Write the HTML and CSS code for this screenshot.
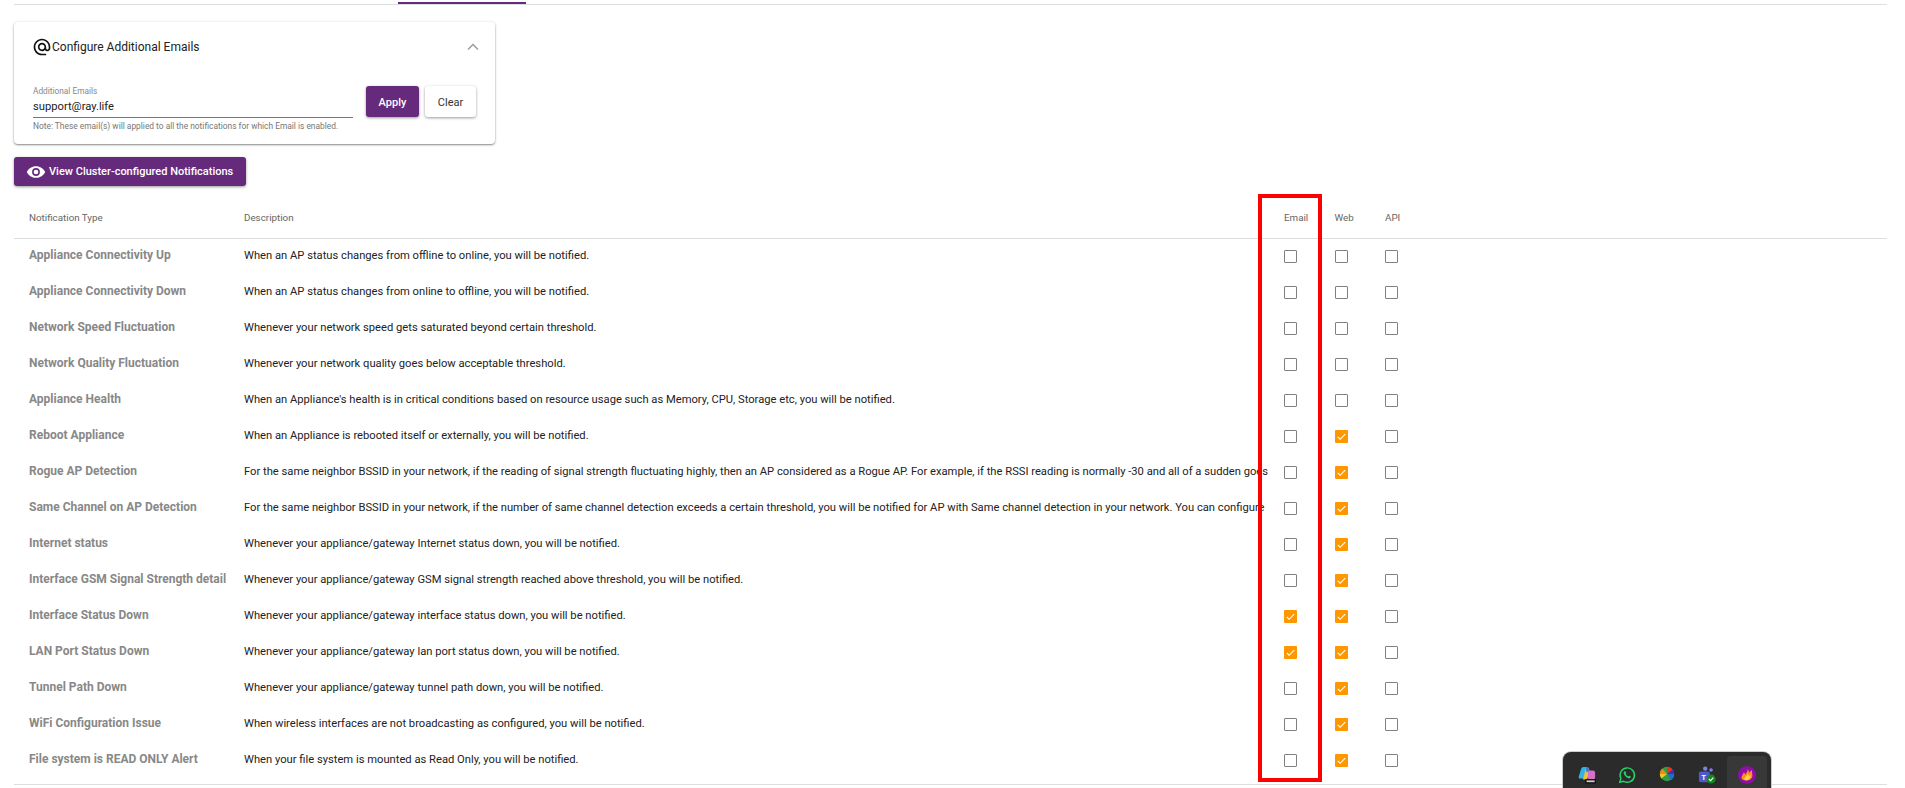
FILE: index.html
```html
<!DOCTYPE html>
<html lang="en">
<head>
    <meta charset="UTF-8">
    <title>Notifications</title>
    <link rel="stylesheet" href="styles.css">
</head>
<body>
    <div class="tabs"><span class="tab-active"></span></div>

    <div class="card">
        <div class="card-head">
            <svg class="at" viewBox="0 0 24 24" width="20" height="20"><path fill="#111" d="M12 2C6.480 2 2 6.480 2 12s4.480 10 10 10h5v-2h-5c-4.340 0-8-3.660-8-8s3.660-8 8-8 8 3.660 8 8v1.430c0 .790-.710 1.570-1.500 1.570s-1.500-.780-1.500-1.570V12c0-2.760-2.240-5-5-5s-5 2.240-5 5 2.240 5 5 5c1.380 0 2.640-.560 3.540-1.470.650.890 1.770 1.470 2.960 1.470 1.970 0 3.500-1.600 3.500-3.570V12c0-5.520-4.480-10-10-10zm0 13c-1.660 0-3-1.340-3-3s1.340-3 3-3 3 1.340 3 3-1.340 3-3 3z"/></svg>
            <span class="card-title">Configure Additional Emails</span>
            <svg class="chevron" viewBox="0 0 24 24" width="20" height="20"><path d="M6 15l6-6 6 6" fill="none" stroke="#999" stroke-width="1.6"/></svg>
        </div>
        <div class="email-row">
            <div class="field">
                <label>Additional Emails</label>
                <div class="value">support@ray.life</div>
                <p class="note">Note: These email(s) will applied to all the notifications for which Email is enabled.</p>
            </div>
            <button class="button button-main">Apply</button>
            <button class="button button-plain">Clear</button>
        </div>
    </div>

    <button class="button button-main button-view">
        <svg viewBox="0 0 24 24" width="20" height="20"><path fill="#fff" d="M12 5C7 5 2.700 8.100 1 12c1.700 3.900 6 7 11 7s9.300-3.100 11-7c-1.700-3.900-6-7-11-7zm0 11.700a4.700 4.700 0 1 1 0-9.400 4.700 4.700 0 0 1 0 9.400zm0-7.500a2.800 2.800 0 1 0 0 5.600 2.800 2.800 0 0 0 0-5.600z"/></svg>
        View Cluster-configured Notifications
    </button>

    <div class="table">
        <div class="row row-head">
            <div class="type">Notification Type</div>
            <div class="desc">Description</div>
            <div class="check">Email</div>
            <div class="check">Web</div>
            <div class="check">API</div>
        </div>
        <div id="rows"></div>
    </div>

    <div class="red-box"></div>

    <div class="dock">
        <span class="dock-item">
            <svg viewBox="0 0 20 20" width="18" height="18"><path d="M6 1h4l-3 13H2c-1 0-1.500-1-1.200-2L3.500 3C4 1.800 5 1 6 1z" fill="#2fb4ea"/><path d="M9 2h3l1 4-3 9H5.500z" fill="#f4c22e"/><path d="M8.500 1.500c1.500-.5 3 0 3.500 1.500l1 3-3.500 1z" fill="#3b7ae0"/><rect x="11" y="5" width="8" height="10" rx="2.500" fill="#d96fc8"/><rect x="8" y="14.500" width="12" height="5" fill="#111"/><rect x="9.500" y="16" width="9" height="2" fill="#ccc"/></svg>
        </span>
        <span class="dock-item">
            <svg viewBox="0 0 20 20" width="18" height="18"><path d="M2 18l1.200-4.300A8 8 0 1 1 6.300 17z" fill="none" stroke="#25d366" stroke-width="1.600"/><path d="M7 6c-1 1-1 2.500.5 4.500S11 14 13 13.500c1-.3 1.300-1.300 1.200-1.800l-2-1-.8 1c-1-.3-2.500-1.800-3-3l.8-.9-.9-2z" fill="#25d366"/></svg>
        </span>
        <span class="dock-item">
            <svg viewBox="0 0 20 20" width="16" height="16"><circle cx="10" cy="10" r="9" fill="#2f9e3f"/><path d="M10 10V1a9 9 0 0 1 7 3.500z" fill="#e8331f"/><path d="M10 10l7-5.500A9 9 0 0 1 19 10z" fill="#4b2ca8"/><path d="M10 10h9a9 9 0 0 1-4 7.500z" fill="#1c6fd0"/><path d="M10 10l-7 5.500A9 9 0 0 1 1 10z" fill="#f3c71e"/><path d="M10 10H1a9 9 0 0 1 3-7z" fill="#f08a1d"/></svg>
        </span>
        <span class="dock-item">
            <svg viewBox="0 0 20 20" width="18" height="18"><circle cx="8" cy="3" r="2.400" fill="#7b83eb"/><circle cx="14.500" cy="4.500" r="2" fill="#7b83eb"/><rect x="1" y="6" width="12" height="12" rx="2" fill="#5059c9"/><text x="3.800" y="15.500" class="teams-t">T</text><circle cx="14.500" cy="14.500" r="5" fill="#13881f"/><path d="M12 14.500l2 1.800 3-3.300" fill="none" stroke="#fff" stroke-width="1.300"/></svg>
        </span>
        <span class="dock-item dock-active">
            <svg viewBox="0 0 20 20" width="18" height="18"><circle cx="10" cy="10" r="10" fill="#8e0fa6"/><path d="M4 14c-.5-3 1.500-4 2.500-7 1 .8 1.300 1.800 1.300 2.800C9.500 7.500 10.500 6 11 3.500c1 1 1.200 2.500 1 4 1-.8 2-2 3.500-3-.3 2.500.5 4 .5 6 0 3-2.500 5.500-6 5.500-3 0-5.700-.5-6-2z" fill="#ff8a2a"/><path d="M7 15c0-2.500 2.500-3.500 4-6.500.8 1.500 1 2 .8 3 .8-.5 1.500-1 2.200-2 .3 3-1 6-4 6.300-1.500.1-3-.2-3-.8z" fill="#ffd23f"/></svg>
        </span>
    </div>

    <script src="rows.js"></script>
</body>
</html>
```

FILE: rows.js
```js
const rows = [
    ["Appliance Connectivity Up", "When an AP status changes from offline to online, you will be notified.", 0, 0, 0],
    ["Appliance Connectivity Down", "When an AP status changes from online to offline, you will be notified.", 0, 0, 0],
    ["Network Speed Fluctuation", "Whenever your network speed gets saturated beyond certain threshold.", 0, 0, 0],
    ["Network Quality Fluctuation", "Whenever your network quality goes below acceptable threshold.", 0, 0, 0],
    ["Appliance Health", "When an Appliance's health is in critical conditions based on resource usage such as Memory, CPU, Storage etc, you will be notified.", 0, 0, 0],
    ["Reboot Appliance", "When an Appliance is rebooted itself or externally, you will be notified.", 0, 1, 0],
    ["Rogue AP Detection", "For the same neighbor BSSID in your network, if the reading of signal strength fluctuating highly, then an AP considered as a Rogue AP. For example, if the RSSI reading is normally -30 and all of a sudden goes", 0, 1, 0],
    ["Same Channel on AP Detection", "For the same neighbor BSSID in your network, if the number of same channel detection exceeds a certain threshold, you will be notified for AP with Same channel detection in your network. You can configure", 0, 1, 0],
    ["Internet status", "Whenever your appliance/gateway Internet status down, you will be notified.", 0, 1, 0],
    ["Interface GSM Signal Strength detail", "Whenever your appliance/gateway GSM signal strength reached above threshold, you will be notified.", 0, 1, 0],
    ["Interface Status Down", "Whenever your appliance/gateway interface status down, you will be notified.", 1, 1, 0],
    ["LAN Port Status Down", "Whenever your appliance/gateway lan port status down, you will be notified.", 1, 1, 0],
    ["Tunnel Path Down", "Whenever your appliance/gateway tunnel path down, you will be notified.", 0, 1, 0],
    ["WiFi Configuration Issue", "When wireless interfaces are not broadcasting as configured, you will be notified.", 0, 1, 0],
    ["File system is READ ONLY Alert", "When your file system is mounted as Read Only, you will be notified.", 0, 1, 0]
];

function box(on) {
    return `<div class="check"><span class="box${on ? " box-on" : ""}">${on ? '<svg viewBox="0 0 14 14" width="13" height="13"><path d="M3 7.500l2.500 2.500L11 4.500" fill="none" stroke="#fff" stroke-width="1.200"/></svg>' : ""}</span></div>`;
}

document.getElementById("rows").innerHTML = rows.map(r =>
    `<div class="row row-body"><div class="type type-bold">${r[0]}</div><div class="desc">${r[1]}</div>${box(r[2])}${box(r[3])}${box(r[4])}</div>`
).join("");
```

FILE: styles.css
```css
body {
    margin: 0;
    height: 788px;
    overflow: hidden;
    font-family: Roboto, "Liberation Sans", sans-serif;
    background-color: #fff;
    color: #222;
    position: relative;
}
.tabs {
    display: flex;
    align-items: flex-end;
    height: 4px;
    border-bottom: 1px solid #dedede;
    margin: 0 18px 0 14px;
    padding-left: 384px;
}
.tab-active {
    width: 128px;
    height: 2px;
    background: #662a7d;
}
.card {
    width: 481px;
    height: 122px;
    margin: 17px 0 0 14px;
    border-radius: 4px;
    background: #fff;
    box-shadow: 0 1px 2px rgba(0, 0, 0, 0.45), 0 0 4px rgba(0, 0, 0, 0.06);
}
.card-head {
    display: flex;
    align-items: center;
    height: 50px;
    padding: 0 12px 0 18px;
    font-size: 12px;
}
.card-title {
    flex: 1;
}
.email-row {
    display: flex;
    align-items: flex-start;
    padding: 14px 0 0 19px;
}
.field {
    width: 320px;
    margin-right: 13px;
}
.field label {
    display: block;
    font-size: 8.300px;
    line-height: 10px;
    color: #888;
}
.value {
    font-size: 11.200px;
    line-height: 20px;
    height: 20px;
    padding-top: 1px;
    border-bottom: 1px solid #777;
}
.note {
    margin: 3px 0 0;
    font-size: 8.400px;
    line-height: 10px;
    color: #777;
}
.button {
    font-family: inherit;
    font-size: 11px;
    font-weight: 500;
    border: none;
    border-radius: 3px;
    box-shadow: 0 1px 3px rgba(0, 0, 0, 0.4);
    height: 31px;
    padding-top: 2px;
}
.button-main {
    background-color: #662a7d;
    color: #fff;
    width: 53px;
}
.button-plain {
    background-color: #fff;
    color: #333;
    width: 51px;
    margin-left: 6px;
    font-weight: 400;
}
.button-view {
    display: flex;
    align-items: center;
    gap: 3px;
    width: 232px;
    height: 29px;
    margin: 13px 0 0 14px;
    padding: 0 0 0 12px;
}
.table {
    margin: 10px 18px 0 14px;
    border-bottom: 1px solid #dedede;
    padding-bottom: 5px;
}
.row {
    display: flex;
    align-items: center;
    height: 36px;
}
.row-body {
    box-sizing: border-box;
    padding-bottom: 2px;
    font-size: 11.200px;
}
.row-body .type,
.row-body .desc {
    margin-bottom: 2px;
}
.row-head {
    height: 42px;
    font-size: 9.800px;
    color: #666;
    border-bottom: 1px solid #dedede;
}
.type {
    width: 215px;
    padding-left: 15px;
    flex-shrink: 0;
}
.type-bold {
    font-weight: 700;
    color: #888;
    font-size: 12px;
}
.desc {
    width: 1040px;
    flex-shrink: 0;
    white-space: nowrap;
}
.check {
    width: 50.500px;
    flex-shrink: 0;
}
.box {
    display: flex;
    box-sizing: border-box;
    width: 13px;
    height: 13px;
    border: 1px solid #808080;
    border-radius: 1px;
}
.box-on {
    border: none;
    background: #ff9800;
}
.red-box {
    position: absolute;
    left: 1258px;
    top: 194px;
    width: 56px;
    height: 580px;
    border: 4px solid #f00;
}
.dock {
    position: absolute;
    left: 1563px;
    top: 752px;
    display: flex;
    width: 208px;
    height: 40px;
    padding: 4px 4px 0 4px;
    box-sizing: border-box;
    background: #2b2b2b;
    border-radius: 8px 8px 0 0;
    box-shadow: 0 0 0 1px #ccc;
}
.dock-item {
    flex: 1;
    display: flex;
    justify-content: center;
    padding-top: 10px;
    height: 40px;
    border-radius: 4px 4px 0 0;
}
.dock-active {
    background: #383838;
}
.teams-t {
    font-family: "Liberation Sans", sans-serif;
    font-size: 8px;
    font-weight: 700;
    fill: #fff;
}
```
